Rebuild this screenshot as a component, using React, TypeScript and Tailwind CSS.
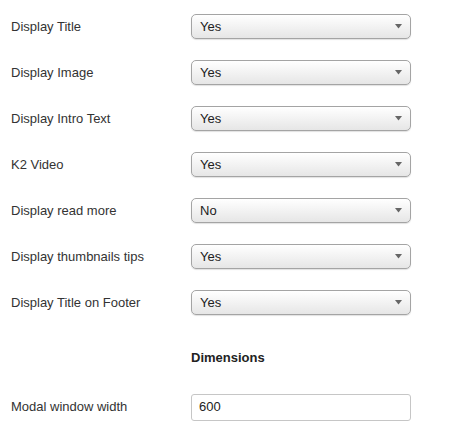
import React from "react";

const rows: [string, string][] = [
  ["Display Title", "Yes"],
  ["Display Image", "Yes"],
  ["Display Intro Text", "Yes"],
  ["K2 Video", "Yes"],
  ["Display read more", "No"],
  ["Display thumbnails tips", "Yes"],
  ["Display Title on Footer", "Yes"],
];

function Select({ value }: { value: string }) {
  return (
    <div className="flex h-[25px] w-[220px] items-center justify-between rounded-[5px] border border-[#a4a4a4] bg-gradient-to-b from-white to-[#e6e6e6] pl-[8px] pr-[8px] shadow-[0_1px_1px_rgba(0,0,0,0.12)]">
      <span className="text-[13px] text-[#222]">{value}</span>
      <svg width="7" height="5" viewBox="0 0 7 5">
        <polygon points="0,0 7,0 3.5,4.5" fill="#666" />
      </svg>
    </div>
  );
}

export default function App() {
  return (
    <div
      className="h-[440px] w-[465px] bg-white pt-[14px] text-[#333]"
      style={{ fontFamily: '"Liberation Sans", Arial, sans-serif' }}
    >
      <div className="flex flex-col gap-[21px]">
        {rows.map(([label, value]) => (
          <div key={label} className="flex items-center">
            <div className="w-[191px] pl-[11px] text-[13px]">{label}</div>
            <Select value={value} />
          </div>
        ))}
      </div>
      <div className="mt-[33px] pl-[191px] text-[13px] font-bold text-[#222]">Dimensions</div>
      <div className="mt-[26px] flex items-center">
        <div className="w-[191px] pl-[11px] text-[13px]">Modal window width</div>
        <div className="flex h-[27px] w-[220px] items-center rounded-[3px] border border-[#c6c6c6] bg-white pl-[7px] text-[13px] text-[#222]">
          600
        </div>
      </div>
    </div>
  );
}
